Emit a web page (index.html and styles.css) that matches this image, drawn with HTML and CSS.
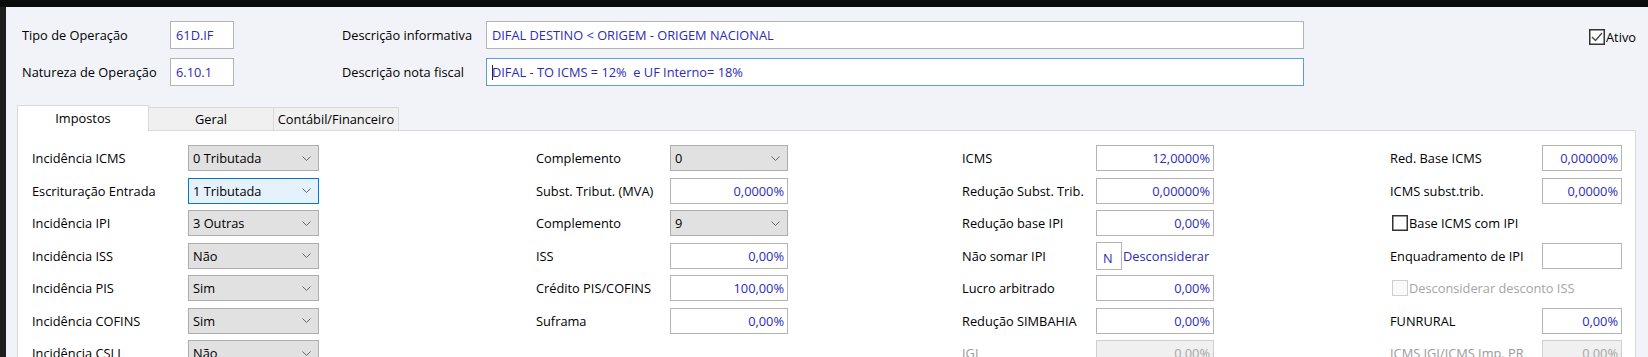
FILE: index.html
```html
<!DOCTYPE html>
<html lang="pt-BR">
<head>
    <meta charset="UTF-8">
    <meta name="viewport" content="width=device-width, initial-scale=1.0">
    <title>Tipo de Operação</title>
    <link rel="stylesheet" href="styles.css">
</head>
<body>
    <div class="topbar"></div>
    <div class="main">
        <div class="side"></div>
        <div class="window">
            <div class="header">
                <span class="lbl">Tipo de Operação</span>
                <div class="field">61D.IF</div>
                <span></span>
                <span class="lbl">Descrição informativa</span>
                <div class="field">DIFAL DESTINO &lt; ORIGEM - ORIGEM NACIONAL</div>
                <label class="check ativo">
                    <svg width="16" height="16" viewBox="0 0 16 16"><rect x="0.75" y="0.75" width="14.5" height="14.5" fill="#fff" stroke="#333" stroke-width="1.5"/><polyline points="3,8 6.5,11.5 13,4" fill="none" stroke="#444" stroke-width="1.3"/></svg>
                    <span>Ativo</span>
                </label>

                <span class="lbl">Natureza de Operação</span>
                <div class="field">6.10.1</div>
                <span></span>
                <span class="lbl">Descrição nota fiscal</span>
                <div class="field focus"><span class="caret"></span>DIFAL - TO ICMS = 12%&nbsp; e UF Interno= 18%</div>
            </div>

            <div class="tabs">
                <div class="tab active">Impostos</div>
                <div class="tab">Geral</div>
                <div class="tab">Contábil/Financeiro</div>
                <div class="tab-fill"></div>
            </div>

            <div class="panel">
                <div class="col col-1">
                    <span class="lbl">Incidência ICMS</span>
                    <div class="sel"><span>0 Tributada</span><svg width="9" height="5" viewBox="0 0 9 5"><polyline points="0.5,0.5 4.5,4.5 8.5,0.5" fill="none" stroke="#666"/></svg></div>
                    <span class="lbl">Escrituração Entrada</span>
                    <div class="sel focus"><span>1 Tributada</span><svg width="9" height="5" viewBox="0 0 9 5"><polyline points="0.5,0.5 4.5,4.5 8.5,0.5" fill="none" stroke="#666"/></svg></div>
                    <span class="lbl">Incidência IPI</span>
                    <div class="sel"><span>3 Outras</span><svg width="9" height="5" viewBox="0 0 9 5"><polyline points="0.5,0.5 4.5,4.5 8.5,0.5" fill="none" stroke="#666"/></svg></div>
                    <span class="lbl">Incidência ISS</span>
                    <div class="sel"><span>Não</span><svg width="9" height="5" viewBox="0 0 9 5"><polyline points="0.5,0.5 4.5,4.5 8.5,0.5" fill="none" stroke="#666"/></svg></div>
                    <span class="lbl">Incidência PIS</span>
                    <div class="sel"><span>Sim</span><svg width="9" height="5" viewBox="0 0 9 5"><polyline points="0.5,0.5 4.5,4.5 8.5,0.5" fill="none" stroke="#666"/></svg></div>
                    <span class="lbl">Incidência COFINS</span>
                    <div class="sel"><span>Sim</span><svg width="9" height="5" viewBox="0 0 9 5"><polyline points="0.5,0.5 4.5,4.5 8.5,0.5" fill="none" stroke="#666"/></svg></div>
                    <span class="lbl">Incidência CSLL</span>
                    <div class="sel"><span>Não</span><svg width="9" height="5" viewBox="0 0 9 5"><polyline points="0.5,0.5 4.5,4.5 8.5,0.5" fill="none" stroke="#666"/></svg></div>
                </div>

                <div class="col col-2">
                    <span class="lbl">Complemento</span>
                    <div class="sel"><span>0</span><svg width="9" height="5" viewBox="0 0 9 5"><polyline points="0.5,0.5 4.5,4.5 8.5,0.5" fill="none" stroke="#666"/></svg></div>
                    <span class="lbl">Subst. Tribut. (MVA)</span>
                    <div class="field num">0,0000%</div>
                    <span class="lbl">Complemento</span>
                    <div class="sel"><span>9</span><svg width="9" height="5" viewBox="0 0 9 5"><polyline points="0.5,0.5 4.5,4.5 8.5,0.5" fill="none" stroke="#666"/></svg></div>
                    <span class="lbl">ISS</span>
                    <div class="field num">0,00%</div>
                    <span class="lbl">Crédito PIS/COFINS</span>
                    <div class="field num">100,00%</div>
                    <span class="lbl">Suframa</span>
                    <div class="field num">0,00%</div>
                </div>

                <div class="col col-3">
                    <span class="lbl">ICMS</span>
                    <div class="field num">12,0000%</div>
                    <span class="lbl">Redução Subst. Trib.</span>
                    <div class="field num">0,00000%</div>
                    <span class="lbl">Redução base IPI</span>
                    <div class="field num">0,00%</div>
                    <span class="lbl">Não somar IPI</span>
                    <div class="combo">
                        <div class="field code">N</div>
                        <span class="link">Desconsiderar</span>
                    </div>
                    <span class="lbl">Lucro arbitrado</span>
                    <div class="field num">0,00%</div>
                    <span class="lbl">Redução SIMBAHIA</span>
                    <div class="field num">0,00%</div>
                    <span class="lbl off">IGI</span>
                    <div class="field num off">0,00%</div>
                </div>

                <div class="col col-4">
                    <span class="lbl">Red. Base ICMS</span>
                    <div class="field num">0,00000%</div>
                    <span class="lbl">ICMS subst.trib.</span>
                    <div class="field num">0,0000%</div>
                    <label class="check wide">
                        <svg width="16" height="16" viewBox="0 0 16 16"><rect x="0.75" y="0.75" width="14.5" height="14.5" fill="#fff" stroke="#333" stroke-width="1.5"/></svg>
                        <span>Base ICMS com IPI</span>
                    </label>
                    <span class="lbl">Enquadramento de IPI</span>
                    <div class="field"></div>
                    <label class="check wide off">
                        <svg width="16" height="16" viewBox="0 0 16 16"><rect x="0.5" y="0.5" width="15" height="15" fill="#fafafa" stroke="#cfcfcf"/></svg>
                        <span>Desconsiderar desconto ISS</span>
                    </label>
                    <span class="lbl">FUNRURAL</span>
                    <div class="field num">0,00%</div>
                    <span class="lbl off">ICMS IGI/ICMS Imp. PR</span>
                    <div class="field num off">0,00%</div>
                </div>
            </div>
        </div>
    </div>
</body>
</html>
```

FILE: styles.css
```css
body {
    margin: 0;
    height: 357px;
    overflow: hidden;
    font-family: "Open Sans", "Noto Sans", sans-serif;
    font-size: 12.8px;
    color: #000;
    background: #f2f3f8;
}
.topbar {
    height: 7px;
    background: #0b0b0b;
}
.main {
    display: flex;
    height: 350px;
}
.side {
    width: 6px;
    background: #1e1e1e;
}
.window {
    flex: 1;
    padding: 14px 12px 0 0;
}
.header {
    display: grid;
    grid-template-columns: 148px 64px 108px 144px 818px 1fr;
    grid-auto-rows: 28px;
    row-gap: 9px;
    align-items: center;
    padding-left: 16px;
}
.lbl {
    white-space: nowrap;
}
.lbl.off {
    color: #9a9a9a;
}
.field {
    box-sizing: border-box;
    height: 100%;
    display: flex;
    align-items: center;
    padding: 0 5px;
    background: #fff;
    border: 1px solid #b4b4b4;
    color: #2b2bb8;
    white-space: nowrap;
}
.field.focus {
    border-color: #5a9ee0;
}
.field.num {
    justify-content: flex-end;
    padding-right: 3px;
}
.field.off {
    background: #f0f0f0;
    border-color: #cfcfcf;
    color: #a5a5a5;
}
.caret {
    display: inline-block;
    height: 15px;
    border-left: 1px solid #222;
    margin-right: -1px;
}
.check {
    display: flex;
    align-items: center;
    gap: 1px;
}
.check svg {
    flex: none;
}
.ativo {
    justify-self: end;
    margin-top: 4px;
}
.tabs {
    display: flex;
    align-items: flex-end;
    height: 26px;
    margin: 19px 0 0 11px;
}
.tab {
    box-sizing: border-box;
    width: 125px;
    height: 24px;
    display: flex;
    align-items: center;
    justify-content: center;
    background: #f0f0f0;
    border: 1px solid #d9d9d9;
    border-left: none;
}
.tab.active {
    width: 132px;
    height: 26px;
    padding-bottom: 1px;
    background: #fff;
    border-left: 1px solid #d9d9d9;
    border-bottom: none;
}
.tab-fill {
    flex: 1;
    border-bottom: 1px solid #d9d9d9;
}
.panel {
    display: flex;
    align-items: flex-start;
    height: 240px;
    margin-left: 11px;
    padding: 14px 0 0 14px;
    background: #fff;
    border: 1px solid #d9d9d9;
    border-top: none;
}
.col {
    display: grid;
    grid-auto-rows: 26px;
    row-gap: 6.5px;
    align-items: center;
}
.col-1 {
    grid-template-columns: 156px 131px;
}
.col-2 {
    grid-template-columns: 134px 118px;
    margin-left: 217px;
}
.col-3 {
    grid-template-columns: 134px 118px;
    margin-left: 174px;
}
.col-4 {
    grid-template-columns: 152px 80px;
    margin-left: 176px;
}
.sel {
    box-sizing: border-box;
    height: 100%;
    display: flex;
    align-items: center;
    justify-content: space-between;
    padding: 0 7px 0 4px;
    background: #e1e1e1;
    border: 1px solid #adadad;
}
.sel.focus {
    background: #e5f1fb;
    border-color: #0078d7;
}
.combo {
    display: flex;
    align-items: center;
    height: 100%;
}
.field.code {
    width: 26px;
    padding: 4px 0 0 6px;
    height: 28px;
}
.link {
    color: #2b2bb8;
    margin-left: 1px;
}
.wide {
    grid-column: 1 / -1;
    margin-left: 2px;
}
.check.off {
    color: #a5a5a5;
}
```
